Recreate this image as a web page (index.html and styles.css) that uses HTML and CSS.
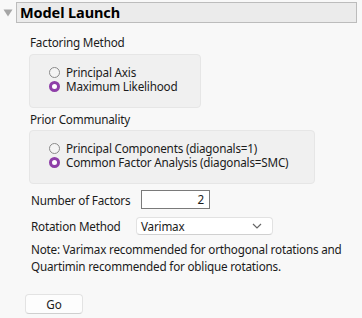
FILE: index.html
```html
<!DOCTYPE html>
<html>
<head>
<meta charset="utf-8">
<link rel="stylesheet" href="styles.css">
</head>
<body>
<div class="outline">
  <div class="head">
    <svg class="tri" width="10" height="8" viewBox="0 0 10 8"><polygon points="0.5,0.5 9.5,0.5 5,7.5" fill="#a6a6a6"/></svg>
    <div class="title">Model Launch</div>
  </div>
  <div class="content">
    <div class="label">Factoring Method</div>
    <div class="group g1">
      <label class="radio"><span class="dot"></span>Principal Axis</label>
      <label class="radio on"><span class="dot"></span>Maximum Likelihood</label>
    </div>
    <div class="label l2">Prior Communality</div>
    <div class="group g2">
      <label class="radio"><span class="dot"></span>Principal Components (diagonals=1)</label>
      <label class="radio on"><span class="dot"></span>Common Factor Analysis (diagonals=SMC)</label>
    </div>
    <div class="row r1">
      <span class="rlabel">Number of Factors</span>
      <span class="num">2</span>
    </div>
    <div class="row r2">
      <span class="rlabel">Rotation Method</span>
      <span class="select">Varimax<svg class="chev" width="10" height="6" viewBox="0 0 10 6"><polyline points="1,1 5,5 9,1" fill="none" stroke="#666" stroke-width="1.2"/></svg></span>
    </div>
    <p class="note">Note: Varimax recommended for orthogonal rotations and Quartimin recommended for oblique rotations.</p>
    <button class="go">Go</button>
  </div>
</div>
</body>
</html>
```
FILE: styles.css
```css
html, body {
  margin: 0;
  padding: 0;
  background: #f8f8f8;
}
body {
  font-family: "Noto Sans", "Open Sans", sans-serif;
  font-size: 11.7px;
  letter-spacing: -0.2px;
  color: #1b1b1b;
  width: 362px;
  height: 318px;
  overflow: hidden;
}
.head {
  display: flex;
  align-items: flex-start;
  padding-top: 2px;
  height: 20px;
}
.tri {
  margin: 7px 0 0 3px;
  width: 10px;
  flex: none;
}
.title {
  margin-left: 3px;
  width: 341px;
  height: 21px;
  box-sizing: border-box;
  border: 1px solid #bcbcbc;
  background: #ebebeb;
  font-weight: bold;
  font-size: 14.5px;
  letter-spacing: -0.1px;
  line-height: 19px;
  padding-left: 3px;
  color: #000;
}
.content {
  padding-left: 29px;
}
.label {
  margin-top: 12px;
  padding-left: 1px;
  height: 17px;
  line-height: 17px;
}
.l2 {
  margin-top: 3px;
}
.group {
  margin-top: 3px;
  background: #f0f0f0;
  border: 1px solid #e6e6e6;
  border-radius: 4px;
  padding: 10px 10px 0 19px;
  display: flex;
  flex-direction: column;
  box-sizing: border-box;
}
.g1 { width: 172px; height: 54px; }
.g2 { width: 286px; height: 54px; margin-top: 2px; }
.radio {
  display: flex;
  align-items: center;
  height: 14px;
  line-height: 14px;
  white-space: nowrap;
}
.dot {
  width: 11px;
  height: 11px;
  box-sizing: border-box;
  border: 1px solid #8a8a8a;
  border-radius: 50%;
  background: #f4f4f4;
  margin-right: 6px;
  flex: none;
}
.radio.on .dot {
  border: 3px solid #8e3ea8;
  background: #ffffff;
}
.row {
  display: flex;
  align-items: center;
}
.r1 { margin-top: 6px; height: 19px; }
.r2 { margin-top: 8px; height: 18px; }
.rlabel {
  padding-left: 2px;
  width: 112px;
  box-sizing: border-box;
  flex: none;
}
.r2 .rlabel { width: 107px; }
.num {
  width: 69px;
  height: 19px;
  box-sizing: border-box;
  border: 1px solid #7a7a7a;
  background: #fff;
  text-align: right;
  padding-right: 5px;
  line-height: 17px;
}
.select {
  width: 137px;
  height: 18px;
  box-sizing: border-box;
  border: 1px solid #e2e2e2;
  border-bottom-color: #d0d0d0;
  border-radius: 4px;
  background: #fff;
  display: flex;
  align-items: center;
  justify-content: space-between;
  padding: 0 10px 0 4px;
  line-height: 16px;
}
.note {
  margin: 6px 0 0 2px;
  width: 326px;
  line-height: 17px;
}
.go {
  display: block;
  margin: 19px 0 0 -4px;
  width: 58px;
  height: 20px;
  font: inherit;
  line-height: 18px;
  color: #1b1b1b;
  background: #fdfdfd;
  border: 1px solid #e3e3e3;
  border-bottom-color: #cfcfcf;
  border-radius: 4px;
  padding: 0;
}
```
